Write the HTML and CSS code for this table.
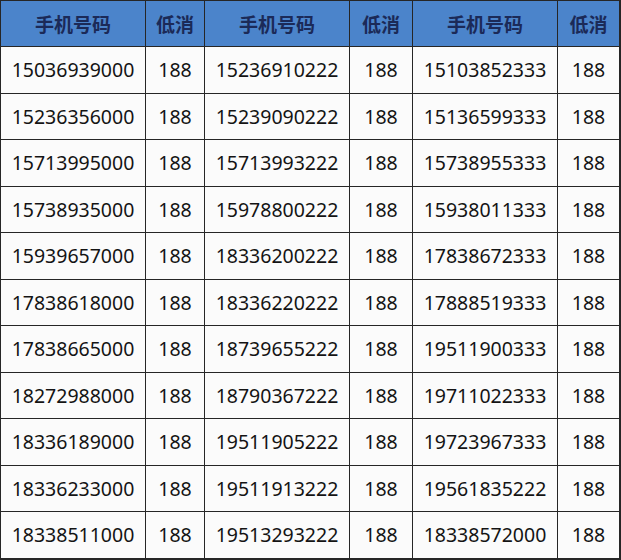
FILE: index.html
```html
<!DOCTYPE html>
<html lang="zh-CN">
<head>
<meta charset="utf-8">
<link rel="stylesheet" href="styles.css">
</head>
<body>
<div class="sheet">
  <div class="cell head">手机号码</div><div class="cell head">低消</div>
  <div class="cell head">手机号码</div><div class="cell head">低消</div>
  <div class="cell head">手机号码</div><div class="cell head">低消</div>

  <div class="cell">15036939000</div><div class="cell">188</div><div class="cell">15236910222</div><div class="cell">188</div><div class="cell">15103852333</div><div class="cell">188</div>
  <div class="cell">15236356000</div><div class="cell">188</div><div class="cell">15239090222</div><div class="cell">188</div><div class="cell">15136599333</div><div class="cell">188</div>
  <div class="cell">15713995000</div><div class="cell">188</div><div class="cell">15713993222</div><div class="cell">188</div><div class="cell">15738955333</div><div class="cell">188</div>
  <div class="cell">15738935000</div><div class="cell">188</div><div class="cell">15978800222</div><div class="cell">188</div><div class="cell">15938011333</div><div class="cell">188</div>
  <div class="cell">15939657000</div><div class="cell">188</div><div class="cell">18336200222</div><div class="cell">188</div><div class="cell">17838672333</div><div class="cell">188</div>
  <div class="cell">17838618000</div><div class="cell">188</div><div class="cell">18336220222</div><div class="cell">188</div><div class="cell">17888519333</div><div class="cell">188</div>
  <div class="cell">17838665000</div><div class="cell">188</div><div class="cell">18739655222</div><div class="cell">188</div><div class="cell">19511900333</div><div class="cell">188</div>
  <div class="cell">18272988000</div><div class="cell">188</div><div class="cell">18790367222</div><div class="cell">188</div><div class="cell">19711022333</div><div class="cell">188</div>
  <div class="cell">18336189000</div><div class="cell">188</div><div class="cell">19511905222</div><div class="cell">188</div><div class="cell">19723967333</div><div class="cell">188</div>
  <div class="cell">18336233000</div><div class="cell">188</div><div class="cell">19511913222</div><div class="cell">188</div><div class="cell">19561835222</div><div class="cell">188</div>
  <div class="cell">18338511000</div><div class="cell">188</div><div class="cell">19513293222</div><div class="cell">188</div><div class="cell">18338572000</div><div class="cell">188</div>
</div>
</body>
</html>
```

FILE: styles.css
```css
html, body {
  margin: 0;
  padding: 0;
  background: #ffffff;
}

.sheet {
  display: grid;
  grid-template-columns: 144px 58px 144px 62px 144px 61px;
  grid-template-rows: 45px repeat(11, 45.5px);
  gap: 1px;
  padding: 1px 2px 2px 1px;
  width: 621px;
  box-sizing: border-box;
  background: #262626;
}

.cell {
  display: flex;
  align-items: center;
  justify-content: center;
  background: #fbfbfb;
  color: #141414;
  font-family: "Noto Sans", "Noto Sans CJK SC", sans-serif;
  font-size: 19.5px;
  line-height: 1;
}

.head {
  background: #4b84cb;
  color: #1b2a58;
  font-family: "Noto Sans CJK SC", sans-serif;
  font-weight: 700;
  font-size: 19px;
}
```
